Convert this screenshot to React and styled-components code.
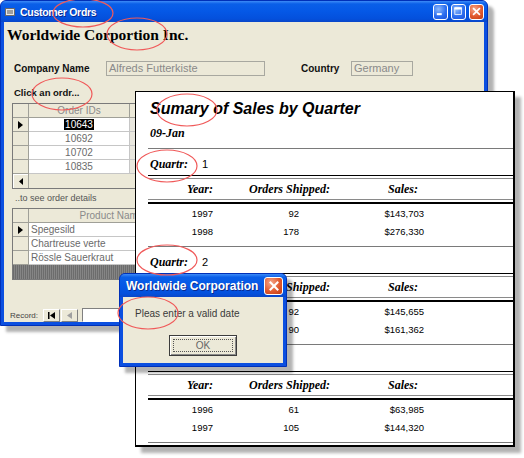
import React from 'react';
import styled, { createGlobalStyle } from 'styled-components';

const GlobalStyle = createGlobalStyle`
  html, body {
    margin: 0;
    padding: 0;
    background: #fff;
  }
  body {
    font-family: "Liberation Sans", Arial, sans-serif;
  }
`;

const Desktop = styled.div`
  position: relative;
  width: 524px;
  height: 458px;
  overflow: hidden;
  background: #fff;
`;

/* ---------- XP window chrome ---------- */

const Frame = styled.div`
  position: absolute;
  left: ${(p) => p.$x}px;
  top: ${(p) => p.$y}px;
  width: ${(p) => p.$w}px;
  height: ${(p) => p.$h}px;
  box-sizing: border-box;
  display: flex;
  flex-direction: column;
  background: #0b4fe0;
  border: 1px solid #0030b8;
  border-radius: 6px 6px 0 0;
  box-shadow: 6px 6px 3px rgba(0, 0, 0, 0.3);
  overflow: hidden;
`;

const TitleBar = styled.div`
  flex: 0 0 ${(p) => p.$h}px;
  display: flex;
  align-items: center;
  gap: ${(p) => p.$gap}px;
  padding: 0 ${(p) => p.$pr}px 0 ${(p) => p.$pl}px;
  background: linear-gradient(#3d8bf7 0%, #0a5fe8 14%, #0558e6 50%, #0450dc 85%, #0a46c8 100%);
`;

const TitleText = styled.span`
  flex: 1;
  color: #fff;
  font: bold ${(p) => p.$size}px "Liberation Sans", Arial, sans-serif;
  letter-spacing: ${(p) => p.$ls || 0}px;
  text-shadow: 1px 1px 0 #0a2a90;
  white-space: nowrap;
`;

const CapButtons = styled.div`
  display: flex;
  gap: 3px;
`;

const CapButton = styled.div`
  width: ${(p) => p.$w}px;
  height: ${(p) => p.$h}px;
  box-sizing: border-box;
  border: 1px solid #fff;
  border-radius: 3px;
  display: flex;
  align-items: center;
  justify-content: center;
  background: ${(p) =>
    p.$close
      ? 'radial-gradient(circle at 35% 30%, #f5a78b, #e15a2f 55%, #c03a12)'
      : 'radial-gradient(circle at 35% 30%, #8db9fb, #2d6ff0 55%, #1a52dd)'};
`;

const CapGlyph = ({ kind, size }) => (
  <svg width={size} height={size} viewBox="0 0 16 16">
    {kind === 'min' && <rect x="3.5" y="10" width="6" height="2.5" fill="#fff" />}
    {kind === 'max' && (
      <g fill="none" stroke="#fff">
        <rect x="3.5" y="3.5" width="8" height="8" />
        <rect x="3.5" y="3.5" width="8" height="1.5" fill="#fff" />
      </g>
    )}
    {kind === 'close' && (
      <g stroke="#fff" strokeWidth="2" strokeLinecap="square">
        <line x1="4.5" y1="4.5" x2="11.5" y2="11.5" />
        <line x1="11.5" y1="4.5" x2="4.5" y2="11.5" />
      </g>
    )}
  </svg>
);

const FormIcon = () => (
  <svg width="10" height="8" viewBox="0 0 10 8">
    <rect x="0.5" y="0.5" width="9" height="7" fill="#e8e8e8" stroke="#6a6a6a" />
    <line x1="2" y1="3" x2="8" y2="3" stroke="#555" />
    <line x1="2" y1="5" x2="8" y2="5" stroke="#555" />
  </svg>
);

/* ---------- Access form ---------- */

const FormBody = styled.div`
  flex: 1;
  min-height: 0;
  margin: 0 3px 3px;
  background: #ece9d8;
  display: flex;
  flex-direction: column;
  overflow: hidden;
`;

const CompanyBanner = styled.div`
  height: 26px;
  margin-left: 3px;
  font: bold 15.5px/26px "Liberation Serif", "Times New Roman", serif;
  color: #000;
  white-space: nowrap;
`;

const FieldRow = styled.div`
  display: flex;
  align-items: center;
  height: 15px;
  margin-top: 13px;
`;

const FieldLabel = styled.span`
  width: ${(p) => p.$w}px;
  margin-left: ${(p) => p.$ml}px;
  font-size: 10px;
  font-weight: bold;
  color: #111;
  white-space: nowrap;
`;

const TextBox = styled.div`
  width: ${(p) => p.$w}px;
  height: 15px;
  box-sizing: border-box;
  border: 1px solid #a8a8a0;
  padding-left: 2px;
  background: ${(p) => (p.$white ? '#fff' : '#ece9d8')};
  font-size: 11px;
  line-height: 13px;
  color: #8a8a8a;
  white-space: nowrap;
`;

const Caption = styled.div`
  margin: ${(p) => p.$mt}px 0 0 ${(p) => p.$ml}px;
  height: 14px;
  line-height: 14px;
  font-size: ${(p) => p.$size}px;
  font-weight: ${(p) => (p.$bold ? 'bold' : 'normal')};
  color: ${(p) => (p.$bold ? '#111' : '#555')};
  white-space: nowrap;
`;

const Sheet = styled.div`
  margin: ${(p) => p.$mt}px 0 0 8px;
  width: ${(p) => p.$w}px;
  border: 1px solid #7a7a7a;
  background: #ece9d8;
  display: flex;
  flex-direction: column;
`;

const SheetRow = styled.div`
  display: grid;
  grid-template-columns: 16px ${(p) => p.$cols};
  height: 14px;
`;

const Cell = styled.div`
  box-sizing: border-box;
  display: flex;
  align-items: center;
  justify-content: ${(p) =>
    p.$align === 'center' ? 'center' : p.$align === 'right' ? 'flex-end' : 'flex-start'};
  padding: 0 2px;
  border-right: 1px solid ${(p) => (p.$head ? '#a0a098' : '#c6c6c6')};
  border-bottom: 1px solid ${(p) => (p.$head ? '#a0a098' : '#c6c6c6')};
  background: ${(p) => (p.$head ? '#ece9d8' : p.$blank ? '#e9e7de' : '#fff')};
  font-size: 10px;
  color: ${(p) => (p.$head ? '#8a8a8a' : '#6a6a6a')};
  white-space: nowrap;
  overflow: hidden;
`;

const Selector = styled.div`
  box-sizing: border-box;
  display: flex;
  align-items: center;
  justify-content: center;
  border-right: 1px solid #a0a098;
  border-bottom: 1px solid #a0a098;
  background: #ece9d8;
`;

const Picked = styled.span`
  background: #000;
  color: #fff;
  padding: 0 1px;
`;

const RowArrow = () => (
  <svg width="5" height="8" viewBox="0 0 5 8">
    <path d="M0 0 L5 4 L0 8 Z" fill="#000" />
  </svg>
);

const ScrollRow = styled.div`
  display: flex;
  height: 14px;
  background: #ece9d8;
`;

const ScrollArrow = styled.div`
  width: 16px;
  box-sizing: border-box;
  display: flex;
  align-items: center;
  justify-content: center;
  border-right: 1px solid #a0a098;
  box-shadow: inset 1px 1px #fff;
`;

const EmptyArea = styled.div`
  height: 14px;
  background: repeating-linear-gradient(90deg, #6c6c6c 0 1px, #858585 1px 2px);
`;

const NavRow = styled.div`
  margin-top: auto;
  height: 14px;
  display: flex;
  align-items: center;
  padding-left: 6px;
`;

const NavLabel = styled.span`
  width: 33px;
  font-size: 8px;
  color: #444;
`;

const NavButton = styled.div`
  width: 17px;
  height: 13px;
  box-sizing: border-box;
  margin-right: 1px;
  display: flex;
  align-items: center;
  justify-content: center;
  border: 1px solid #fff;
  border-right-color: #808080;
  border-bottom-color: #808080;
  background: #ece9d8;
`;

const NavInput = styled.div`
  width: 60px;
  height: 14px;
  margin-left: 3px;
  box-sizing: border-box;
  border: 1px solid #808080;
  border-right-color: #fff;
  border-bottom-color: #fff;
  background: #fff;
`;

/* ---------- Report ---------- */

const ReportPage = styled.div`
  position: absolute;
  left: 135px;
  top: 91px;
  width: 380px;
  height: 356px;
  box-sizing: border-box;
  display: flex;
  flex-direction: column;
  background: #fff;
  border: 1px solid #000;
  border-right-width: 2px;
  border-bottom-width: 2px;
  box-shadow: 6px 6px 3px rgba(0, 0, 0, 0.3);
  overflow: hidden;
`;

const ReportTitle = styled.div`
  margin: 7px 0 0 14px;
  font: italic bold 16px/20px "Liberation Sans", Arial, sans-serif;
  color: #000;
  white-space: nowrap;
`;

const ReportDate = styled.div`
  margin: 6px 0 0 14px;
  font: italic bold 12px/16px "Liberation Serif", "Times New Roman", serif;
  color: #000;
`;

const Groups = styled.div`
  margin-top: 7px;
  display: flex;
  flex-direction: column;
`;

const Group = styled.div`
  flex: 0 0 98px;
  display: flex;
  flex-direction: column;
`;

const Rule = styled.div`
  margin-left: 12px;
  height: 1px;
  flex-shrink: 0;
  background: ${(p) => p.$color || '#7a7a7a'};
`;

const DoubleRule = styled.div`
  margin-left: 12px;
  height: 2px;
  flex-shrink: 0;
  border-top: ${(p) => p.$top};
  border-bottom: ${(p) => p.$bottom};
`;

const QuarterHead = styled.div`
  height: 26px;
  box-sizing: border-box;
  padding: 4px 0 0 14px;
  display: flex;
  align-items: center;
  gap: 14px;
`;

const QuarterLabel = styled.span`
  font: italic bold 12px "Liberation Serif", "Times New Roman", serif;
  color: #000;
`;

const QuarterNum = styled.span`
  font-size: 11px;
  color: #000;
`;

const ReportRow = styled.div`
  display: grid;
  grid-template-columns: 77px 117px 94px;
  height: ${(p) => p.$h}px;
  align-items: center;
`;

const HeadCell = styled.div`
  text-align: right;
  padding-right: ${(p) => p.$pr || 0}px;
  font: italic bold 12px "Liberation Serif", "Times New Roman", serif;
  color: #000;
  white-space: nowrap;
`;

const DataCell = styled.div`
  text-align: right;
  padding-right: ${(p) => p.$pr || 0}px;
  font-size: 9.5px;
  color: #000;
  white-space: nowrap;
`;

/* ---------- Message box ---------- */

const DialogBody = styled.div`
  flex: 1;
  margin: 0 3px 3px;
  background: #ece9d8;
  display: flex;
  flex-direction: column;
  align-items: center;
`;

const DialogText = styled.div`
  align-self: stretch;
  padding: 10px 0 0 12px;
  font-size: 10px;
  line-height: 14px;
  color: #3a3a3a;
`;

const OkButton = styled.div`
  margin-top: 14px;
  width: 68px;
  height: 21px;
  box-sizing: border-box;
  padding: 3px;
  border: 1px solid #3c3c3c;
  background: #ece9d8;
  box-shadow: inset 1px 1px #fff, inset -1px -1px #8a8a8a;
  display: flex;
`;

const FocusRing = styled.div`
  flex: 1;
  border: 1px dotted #555;
  display: flex;
  align-items: center;
  justify-content: center;
  font-size: 10px;
  color: #666;
`;

/* ---------- Red proof-reading marks ---------- */

const Marks = styled.svg`
  position: absolute;
  left: 0;
  top: 0;
  pointer-events: none;
`;

const marks = [
  [83, 13, 30, 14],
  [137, 34, 30, 16],
  [62, 94, 30, 16],
  [187, 110, 30, 16],
  [167, 166, 30, 16],
  [167, 260, 30, 15],
  [148, 313, 30, 16],
];

const orderIds = ['10643', '10692', '10702', '10835'];
const products = ['Spegesild', 'Chartreuse verte', 'Rössle Sauerkraut'];

const quarters = [
  { q: 1, rows: [['1997', '92', '$143,703'], ['1998', '178', '$276,330']] },
  { q: 2, rows: [['1997', '92', '$145,655'], ['1998', '90', '$161,362']] },
  { q: 3, rows: [['1996', '61', '$63,985'], ['1997', '105', '$144,320']] },
];

const CustomerOrders = () => (
  <Frame $x={0} $y={0} $w={488} $h={326}>
    <TitleBar $h={21} $gap={5} $pl={4} $pr={3}>
      <FormIcon />
      <TitleText $size={10.5} $ls={-0.3}>Customer Ordrs</TitleText>
      <CapButtons>
        <CapButton $w={15} $h={16}><CapGlyph kind="min" size={13} /></CapButton>
        <CapButton $w={15} $h={16}><CapGlyph kind="max" size={13} /></CapButton>
        <CapButton $w={15} $h={16} $close><CapGlyph kind="close" size={13} /></CapButton>
      </CapButtons>
    </TitleBar>
    <FormBody>
      <CompanyBanner>Worldwide Corportion Inc.</CompanyBanner>
      <FieldRow>
        <FieldLabel $ml={10} $w={92}>Company Name</FieldLabel>
        <TextBox $w={159}>Alfreds Futterkiste</TextBox>
        <FieldLabel $ml={36} $w={50}>Country</FieldLabel>
        <TextBox $w={62}>Germany</TextBox>
      </FieldRow>
      <Caption $mt={10} $ml={10} $size={9.5} $bold>Click an ordr...</Caption>
      <Sheet $mt={3} $w={190}>
        <SheetRow $cols="101px 1fr">
          <Selector />
          <Cell $head $align="center">Order IDs</Cell>
          <Cell $head />
        </SheetRow>
        {orderIds.map((id, i) => (
          <SheetRow key={id} $cols="101px 1fr">
            <Selector>{i === 0 && <RowArrow />}</Selector>
            <Cell $align="center">{i === 0 ? <Picked>{id}</Picked> : id}</Cell>
            <Cell $blank />
          </SheetRow>
        ))}
        <ScrollRow>
          <ScrollArrow>
            <svg width="4" height="7" viewBox="0 0 4 7">
              <path d="M4 0 L0 3.5 L4 7 Z" fill="#000" />
            </svg>
          </ScrollArrow>
        </ScrollRow>
      </Sheet>
      <Caption $mt={2} $ml={11} $size={9}>..to see order details</Caption>
      <Sheet $mt={3} $w={200}>
        <SheetRow $cols="166px 1fr">
          <Selector />
          <Cell $head $align="center">Product Name</Cell>
          <Cell $head />
        </SheetRow>
        {products.map((name, i) => (
          <SheetRow key={name} $cols="166px 1fr">
            <Selector>{i === 0 && <RowArrow />}</Selector>
            <Cell>{name}</Cell>
            <Cell $blank />
          </SheetRow>
        ))}
        <EmptyArea />
      </Sheet>
      <NavRow>
        <NavLabel>Record:</NavLabel>
        <NavButton>
          <svg width="7" height="7" viewBox="0 0 7 7">
            <rect x="0" y="0" width="1.5" height="7" fill="#000" />
            <path d="M7 0 L2 3.5 L7 7 Z" fill="#000" />
          </svg>
        </NavButton>
        <NavButton>
          <svg width="5" height="7" viewBox="0 0 5 7">
            <path d="M5 0 L0 3.5 L5 7 Z" fill="#a0a0a0" />
          </svg>
        </NavButton>
        <NavInput />
      </NavRow>
    </FormBody>
  </Frame>
);

const SalesReport = () => (
  <ReportPage>
    <ReportTitle>Sumary of Sales by Quarter</ReportTitle>
    <ReportDate>09-Jan</ReportDate>
    <Groups>
      {quarters.map((g) => (
        <Group key={g.q}>
          <Rule />
          <QuarterHead>
            <QuarterLabel>Quartr:</QuarterLabel>
            <QuarterNum>{g.q}</QuarterNum>
          </QuarterHead>
          <DoubleRule $top="1px solid #000" $bottom="1px solid #8a8a8a" />
          <ReportRow $h={20}>
            <HeadCell>Year:</HeadCell>
            <HeadCell>Orders Shipped:</HeadCell>
            <HeadCell $pr={6}>Sales:</HeadCell>
          </ReportRow>
          <DoubleRule $top="1px solid #8a8a8a" $bottom="2px solid #000" />
          {g.rows.map(([year, orders, sales]) => (
            <ReportRow key={year} $h={18}>
              <DataCell>{year}</DataCell>
              <DataCell $pr={31}>{orders}</DataCell>
              <DataCell>{sales}</DataCell>
            </ReportRow>
          ))}
        </Group>
      ))}
      <Rule />
    </Groups>
  </ReportPage>
);

const MessageBox = () => (
  <Frame $x={119} $y={273} $w={168} $h={94}>
    <TitleBar $h={23} $gap={4} $pl={6} $pr={3}>
      <TitleText $size={12}>Worldwide Corporation</TitleText>
      <CapButton $w={19} $h={18} $close><CapGlyph kind="close" size={16} /></CapButton>
    </TitleBar>
    <DialogBody>
      <DialogText>Pleas enter a valid date</DialogText>
      <OkButton>
        <FocusRing>OK</FocusRing>
      </OkButton>
    </DialogBody>
  </Frame>
);

const App = () => (
  <>
    <GlobalStyle />
    <Desktop>
      <CustomerOrders />
      <SalesReport />
      <MessageBox />
      <Marks width="524" height="458" viewBox="0 0 524 458">
        {marks.map(([cx, cy, rx, ry]) => (
          <ellipse
            key={`${cx}-${cy}`}
            cx={cx}
            cy={cy}
            rx={rx}
            ry={ry}
            fill="none"
            stroke="#f05a5a"
            strokeWidth="1.2"
          />
        ))}
      </Marks>
    </Desktop>
  </>
);

export default App;
